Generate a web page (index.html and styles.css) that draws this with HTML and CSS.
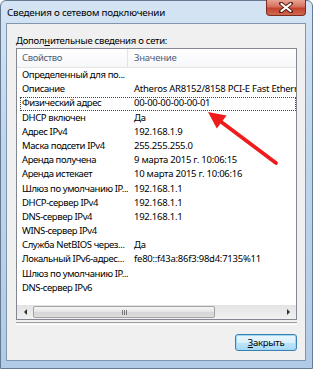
FILE: index.html
```html
<!DOCTYPE html>
<html lang="ru">
<head>
    <meta charset="UTF-8">
    <meta name="viewport" content="width=device-width, initial-scale=1.0">
    <title>Сведения о сетевом подключении</title>
    <link rel="stylesheet" href="styles.css">
</head>
<body>
    <div class="window">
        <div class="titlebar">
            <span class="title">Сведения о сетевом подключении</span>
            <div class="close">
                <svg width="16" height="11" viewBox="0 0 16 11">
                    <path d="M3 1.5 L13 9.5 M13 1.5 L3 9.5" stroke="#5b1f17" stroke-width="4" stroke-linecap="round"/>
                    <path d="M3.5 2 L12.5 9 M12.5 2 L3.5 9" stroke="#fff" stroke-width="2.2" stroke-linecap="round"/>
                </svg>
            </div>
        </div>
        <div class="client">
            <div class="caption">Допол<u>н</u>ительные сведения о сети:</div>
            <div class="listview">
                <div class="header">
                    <div class="hcell c1">Свойство</div>
                    <div class="hcell c2">Значение</div>
                </div>
                <div class="rows">
                    <div class="row"><div class="c1">Определенный для по...</div><div class="c2"></div></div>
                    <div class="row"><div class="c1">Описание</div><div class="c2">Atheros AR8152/8158 PCI-E Fast Etherne</div></div>
                    <div class="row focused"><div class="c1">Физический адрес</div><div class="c2">00-00-00-00-00-01</div></div>
                    <div class="row"><div class="c1">DHCP включен</div><div class="c2">Да</div></div>
                    <div class="row"><div class="c1">Адрес IPv4</div><div class="c2">192.168.1.9</div></div>
                    <div class="row"><div class="c1">Маска подсети IPv4</div><div class="c2">255.255.255.0</div></div>
                    <div class="row"><div class="c1">Аренда получена</div><div class="c2">9 марта 2015 г. 10:06:15</div></div>
                    <div class="row"><div class="c1">Аренда истекает</div><div class="c2">10 марта 2015 г. 10:06:16</div></div>
                    <div class="row"><div class="c1">Шлюз по умолчанию IP...</div><div class="c2">192.168.1.1</div></div>
                    <div class="row"><div class="c1">DHCP-сервер IPv4</div><div class="c2">192.168.1.1</div></div>
                    <div class="row"><div class="c1">DNS-сервер IPv4</div><div class="c2">192.168.1.1</div></div>
                    <div class="row"><div class="c1">WINS-сервер IPv4</div><div class="c2"></div></div>
                    <div class="row"><div class="c1">Служба NetBIOS через...</div><div class="c2">Да</div></div>
                    <div class="row"><div class="c1">Локальный IPv6-адрес...</div><div class="c2">fe80::f43a:86f3:98d4:7135%11</div></div>
                    <div class="row"><div class="c1">Шлюз по умолчанию IP...</div><div class="c2"></div></div>
                    <div class="row"><div class="c1">DNS-сервер IPv6</div><div class="c2"></div></div>
                </div>
                <div class="hscroll">
                    <div class="sbtn"><span class="tri-left"></span></div>
                    <div class="thumb"><span class="grip"></span></div>
                    <div class="track"></div>
                    <div class="sbtn"><span class="tri-right"></span></div>
                </div>
            </div>
            <div class="separator"></div>
            <div class="buttons">
                <button class="button" type="button"><u>З</u>акрыть</button>
            </div>
        </div>
        <svg class="arrow" width="313" height="369" viewBox="0 0 313 369">
            <line x1="276" y1="163" x2="218" y2="119.5" stroke="#ee1c1c" stroke-width="3.8" stroke-linecap="round"/>
            <polygon points="208,112 216.8,128.6 226.6,115.6" fill="#ee1c1c"/>
        </svg>
    </div>
</body>
</html>
```

FILE: styles.css
```css
body {
    margin: 0;
    font-family: "Noto Sans", "Open Sans", sans-serif;
    font-size: 9.5px;
    letter-spacing: -0.25px;
    color: #000;
}
.window {
    position: relative;
    width: 313px;
    height: 369px;
    box-sizing: border-box;
    border: 1px solid #667a92;
    border-radius: 6px 6px 0 0;
    background: linear-gradient(to bottom, #d4e4f4 0%, #bfd5ec 40%, #b1cbe7 100%);
    padding: 0 6px 7px 5px;
    display: flex;
    flex-direction: column;
}
.titlebar {
    height: 22px;
    display: flex;
    justify-content: space-between;
    align-items: flex-start;
}
.title {
    font-size: 9.8px;
    letter-spacing: -0.2px;
    margin: 5px 0 0 1px;
    color: #000;
}
.close {
    width: 40px;
    height: 16px;
    margin-top: -1px;
    box-sizing: border-box;
    border: 1px solid #7b2b21;
    border-top: none;
    border-radius: 0 0 4px 4px;
    background: linear-gradient(to bottom, #e8a394 0%, #d7705d 45%, #c2432e 55%, #cf6a4f 100%);
    display: flex;
    justify-content: center;
    align-items: center;
}
.close svg {
    display: block;
}
.client {
    flex: 1;
    background-color: #f0f0f0;
    border: 1px solid #8197b0;
    display: flex;
    flex-direction: column;
    padding: 10px 8px 0 9px;
}
.caption {
    height: 14px;
    line-height: 13px;
}
.listview {
    height: 272px;
    box-sizing: border-box;
    border: 1px solid #828790;
    background-color: #fff;
    display: flex;
    flex-direction: column;
    overflow: hidden;
}
.header {
    height: 18px;
    flex: none;
    display: flex;
    border-bottom: 1px solid #e5e5e5;
    background: linear-gradient(to bottom, #ffffff, #f6f7f9);
    color: #4c607a;
    line-height: 17px;
}
.hcell.c1 {
    border-right: 1px solid #e5e5e5;
}
.rows {
    flex: 1;
}
.row {
    position: relative;
    display: flex;
    height: 14.2px;
    line-height: 14.2px;
    white-space: nowrap;
}
.c1 {
    width: 111px;
    flex: none;
    box-sizing: border-box;
    padding-left: 5px;
    letter-spacing: -0.4px;
    overflow: hidden;
}
.c2 {
    flex: 1;
    min-width: 0;
    padding-left: 6px;
    overflow: hidden;
}
.row.focused::after {
    content: "";
    position: absolute;
    top: 1px;
    left: 3px;
    right: 0;
    bottom: 0;
    border: 1px dotted #444;
}
.hscroll {
    height: 14px;
    flex: none;
    display: flex;
    background: linear-gradient(to bottom, #e3e3e3, #f1f1f1);
}
.sbtn {
    width: 16px;
    display: flex;
    justify-content: center;
    align-items: center;
}
.tri-left {
    border-right: 3px solid #333;
    border-top: 3px solid transparent;
    border-bottom: 3px solid transparent;
}
.tri-right {
    border-left: 3px solid #333;
    border-top: 3px solid transparent;
    border-bottom: 3px solid transparent;
}
.thumb {
    width: 182px;
    box-sizing: border-box;
    margin: 1px 0;
    border: 1px solid #a3a3a3;
    border-radius: 2px;
    background: linear-gradient(to bottom, #f6f6f6, #e4e4e4 50%, #d6d6d6 51%, #dedede);
    display: flex;
    justify-content: center;
    align-items: center;
}
.grip {
    width: 5px;
    height: 5px;
    background: repeating-linear-gradient(to right, #777 0, #777 1px, transparent 1px, transparent 2px);
}
.track {
    flex: 1;
}
.separator {
    margin-top: 2px;
    height: 1px;
    border-top: 1px solid #a0a0a0;
    border-bottom: 1px solid #fff;
}
.buttons {
    display: flex;
    justify-content: flex-end;
    margin-top: 9px;
}
.button {
    width: 62px;
    height: 17px;
    padding: 0;
    font-family: "Noto Sans", "Open Sans", sans-serif;
    font-size: 9.5px;
    letter-spacing: -0.25px;
    color: #000;
    border: 1px solid #3c7fb1;
    border-radius: 3px;
    background: linear-gradient(to bottom, #eaf6fd 0%, #d9f0fc 50%, #bee6fd 51%, #a7d9f5 100%);
    box-shadow: inset 0 0 0 1px #9fd7f5;
}
.arrow {
    position: absolute;
    left: -1px;
    top: -1px;
    pointer-events: none;
}
```
